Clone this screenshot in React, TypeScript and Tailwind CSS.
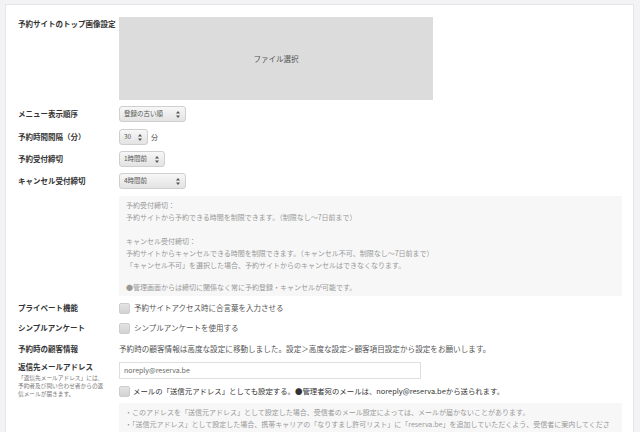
import React from "react";

const font = { fontFamily: '"Noto Sans CJK JP", "Noto Sans", sans-serif' };

function Arrows() {
  return (
    <svg width="4" height="7" viewBox="0 0 4 7" className="shrink-0">
      <path d="M2 0 L4 2.6 L0 2.6 Z" fill="#555" />
      <path d="M2 7 L4 4.4 L0 4.4 Z" fill="#555" />
    </svg>
  );
}

function Select({ value, w }: { value: string; w: string }) {
  return (
    <div
      className={`${w} h-[16px] flex items-center justify-between pl-[4px] pr-[5px] rounded-[3px] border border-[#cfcfcf] bg-gradient-to-b from-[#f7f7f7] to-[#e3e3e3] text-[6.5px] text-[#555]`}
    >
      <span>{value}</span>
      <Arrows />
    </div>
  );
}

function Check() {
  return (
    <div className="w-[11px] h-[11px] shrink-0 rounded-[2px] border border-[#cdcdcd] bg-gradient-to-b from-[#e4e4e4] to-[#d2d2d2]" />
  );
}

function Label({ children }: { children: React.ReactNode }) {
  return (
    <div className="w-[101px] shrink-0 text-[7.5px] font-bold text-[#333] leading-[10px]">
      {children}
    </div>
  );
}

export default function App() {
  return (
    <div className="w-[640px] h-[432px] overflow-hidden bg-[#f3f3f5] pt-[4px] pl-[5px] pr-[6px]" style={font}>
      <div className="h-[440px] bg-white border border-[#e6e6e8] pt-[12px] pl-[12px] pr-[11px]">
        {/* top image */}
        <div className="flex">
          <Label>
            <div className="pt-[2px]">予約サイトのトップ画像設定</div>
          </Label>
          <div className="w-[314px] h-[83px] bg-[#dcdcdc] flex items-center justify-center text-[7.5px] text-[#555]">
            ファイル選択
          </div>
        </div>

        <div className="flex items-center mt-[6px]">
          <Label>メニュー表示順序</Label>
          <Select value="登録の古い順" w="w-[67px]" />
        </div>
        <div className="flex items-center mt-[7px]">
          <Label>予約時間間隔（分）</Label>
          <Select value="30" w="w-[29px]" />
          <span className="ml-[3px] text-[7px] text-[#444]">分</span>
        </div>
        <div className="flex items-center mt-[6px]">
          <Label>予約受付締切</Label>
          <Select value="1時間前" w="w-[46px]" />
        </div>
        <div className="flex items-center mt-[6px]">
          <Label>キャンセル受付締切</Label>
          <Select value="4時間前" w="w-[67px]" />
        </div>

        <div className="flex mt-[7px]">
          <div className="w-[101px] shrink-0" />
          <div className="flex-1 h-[100px] bg-[#f7f7f7] pt-[3px] pl-[7px] text-[7px] leading-[12px] text-[#999]">
            <div>予約受付締切：</div>
            <div>予約サイトから予約できる時間を制限できます。（制限なし〜7日前まで）</div>
            <div className="h-[12px]" />
            <div>キャンセル受付締切：</div>
            <div>予約サイトからキャンセルできる時間を制限できます。（キャンセル不可、制限なし〜7日前まで）</div>
            <div>「キャンセル不可」を選択した場合、予約サイトからのキャンセルはできなくなります。</div>
            <div className="h-[10px]" />
            <div>●管理画面からは締切に関係なく常に予約登録・キャンセルが可能です。</div>
          </div>
        </div>

        <div className="flex items-center h-[20px] mt-[2px]">
          <Label>プライベート機能</Label>
          <Check />
          <span className="ml-[4px] text-[7.5px] text-[#555]">予約サイトアクセス時に合言葉を入力させる</span>
        </div>
        <div className="flex items-center h-[20px]">
          <Label>シンプルアンケート</Label>
          <Check />
          <span className="ml-[4px] text-[7.5px] text-[#555]">シンプルアンケートを使用する</span>
        </div>
        <div className="flex items-center h-[20px] mt-[1px]">
          <Label>予約時の顧客情報</Label>
          <span className="text-[7.6px] text-[#555]">
            予約時の顧客情報は高度な設定に移動しました。設定＞高度な設定＞顧客項目設定から設定をお願いします。
          </span>
        </div>

        <div className="flex mt-[3px]">
          <div className="w-[101px] shrink-0">
            <div className="text-[7.5px] font-bold text-[#333] leading-[10px]">返信先メールアドレス</div>
            <div className="mt-[2px] text-[5.7px] leading-[8px] text-[#777]">
              <div>「返信先メールアドレス」には、</div>
              <div>予約者及び問い合わせ者からの返</div>
              <div>信メールが届きます。</div>
            </div>
          </div>
          <div className="flex-1">
            <div className="w-[302px] h-[17px] border border-[#dedede] flex items-center pl-[4px] text-[7px] text-[#666]">
              noreply@reserva.be
            </div>
            <div className="flex items-center h-[12px] mt-[6px]">
              <Check />
              <span className="ml-[3px] text-[7.4px] text-[#333]">
                メールの「送信元アドレス」としても設定する。●管理者宛のメールは、noreply@reserva.beから送られます。
              </span>
            </div>
            <div className="mt-[6px] h-[60px] bg-[#f7f7f7] pt-[3px] pl-[6px] pr-[12px] text-[7px] leading-[12px] text-[#999]">
              <div>・このアドレスを「送信元アドレス」として設定した場合、受信者のメール設定によっては、メールが届かないことがあります。</div>
              <div>・「送信元アドレス」として設定した場合、携帯キャリアの「なりすまし許可リスト」に「reserva.be」を追加していただくよう、受信者に案内してください。</div>
            </div>
          </div>
        </div>
      </div>
    </div>
  );
}
